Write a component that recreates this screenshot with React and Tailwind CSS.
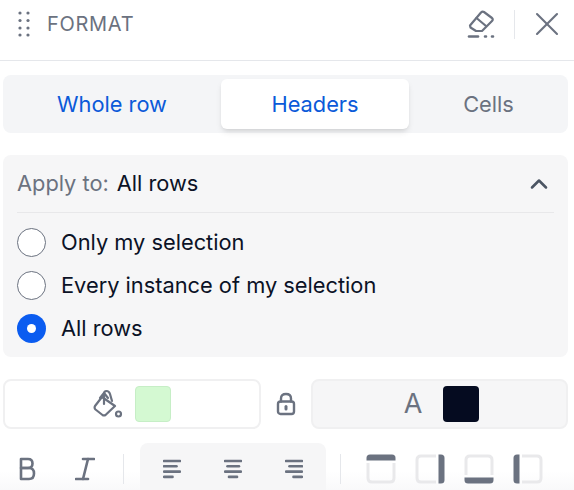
import { X, ChevronUp } from "lucide-react";

function DragDots() {
  return (
    <svg width="14" height="26" viewBox="0 0 14 26" fill="#6b7280">
      {[2, 9.5, 17, 24].map((y) => (
        <g key={y}>
          <circle cx="3" cy={y} r="1.6" />
          <circle cx="11" cy={y} r="1.6" />
        </g>
      ))}
    </svg>
  );
}

function EraserIcon() {
  return (
    <svg width="30" height="30" viewBox="0 0 30 30" fill="none" stroke="#6b7280" strokeWidth="2.2" strokeLinejoin="round" strokeLinecap="round">
      <path d="M3 16.5 L14 3.5 Q15.5 2 17 3 L25 9 Q26.5 10.5 25 12 L15 22 H9 L3.5 18.5 Z" />
      <path d="M9.5 9 L19 17" />
      <path d="M2 27.5 H11" strokeWidth="2.6" />
      <path d="M18 27.5 H19 M25 27.5 H26" strokeWidth="2.6" />
    </svg>
  );
}

function BucketIcon() {
  return (
    <svg width="30" height="30" viewBox="0 0 30 30" fill="none" stroke="#6b7280" strokeWidth="2.2" strokeLinejoin="round" strokeLinecap="round">
      <path d="M9 8 L2 17 Q1 19 2.5 20.5 L9.5 26 Q11 27 12.5 26 L22 17 Z" />
      <path d="M11 15 V5 Q11 2 13.5 2 Q16 2 17 5 L19 12" />
      <path d="M7 9 L11 4 L15 9" />
      <circle cx="25.5" cy="25" r="2.5" />
    </svg>
  );
}

function LockIcon() {
  return (
    <svg width="20" height="24" viewBox="0 0 20 24" fill="none" stroke="#6b7280" strokeWidth="2.4" strokeLinecap="round" strokeLinejoin="round">
      <rect x="2" y="9.5" width="16" height="12.5" rx="2.5" />
      <path d="M5 9.5 V6.5 Q5 2 10 2 Q15 2 15 6.5 V9.5" />
      <path d="M10 14.5 V17" strokeWidth="3" />
    </svg>
  );
}

function BoldIcon() {
  return (
    <svg width="20" height="26" viewBox="0 0 20 26" fill="none" stroke="#6b7280" strokeWidth="2.6" strokeLinecap="round" strokeLinejoin="round">
      <path d="M4 3 H11 Q15.5 3 15.5 7.5 Q15.5 12 11 12 H4 Z" />
      <path d="M4 12 H12 Q17 12 17 17.5 Q17 23 12 23 H4 Z" />
    </svg>
  );
}

function ItalicIcon() {
  return (
    <svg width="20" height="26" viewBox="0 0 20 26" fill="none" stroke="#6b7280" strokeWidth="2.6" strokeLinecap="round">
      <path d="M8 3 H19" />
      <path d="M1 23 H13" />
      <path d="M13 3 L8 23" />
    </svg>
  );
}

function AlignIcon({ lines }) {
  return (
    <svg width="18" height="20" viewBox="0 0 18 20" stroke="#6b7280" strokeWidth="2.6" strokeLinecap="round">
      {lines.map(([a, b], i) => (
        <path key={i} d={`M${a} ${2 + i * 5.3} H${b}`} />
      ))}
    </svg>
  );
}

function BorderIcon({ rotate }) {
  return (
    <svg width="30" height="30" viewBox="0 0 30 30" fill="none">
      <g transform={`rotate(${rotate} 15 15)`}>
        <path d="M2 9 V24 Q2 28 6 28 H24 Q28 28 28 24 V9" stroke="#e9e9eb" strokeWidth="3" />
        <path d="M0.5 4 Q0.5 0.5 4 0.5 H26 Q29.5 0.5 29.5 4 V6.5 H0.5 Z" fill="#6b7280" />
      </g>
    </svg>
  );
}

function Radio({ checked, label }) {
  return (
    <label className="flex items-center gap-[15px] h-[43px]">
      {checked ? (
        <span className="w-[29px] h-[29px] rounded-full bg-[#0b5cf0] flex items-center justify-center">
          <span className="w-[9px] h-[9px] rounded-full bg-white" />
        </span>
      ) : (
        <span className="w-[29px] h-[29px] rounded-full bg-white border border-[#6b7280]" />
      )}
      <span className="text-[21.8px] tracking-[0px] text-[#0b1226]">{label}</span>
    </label>
  );
}

export default function App() {
  return (
    <div className="w-[574px] h-[490px] overflow-hidden bg-white font-['Inter',sans-serif]">
      <div className="h-[61px] border-b border-[#e5e7eb] flex items-center pl-[17px] pr-[7px] pb-[12px]">
        <DragDots />
        <span className="ml-[16px] text-[20px] tracking-[0.7px] text-[#6b7280]">FORMAT</span>
        <div className="ml-auto flex items-center">
          <EraserIcon />
          <div className="w-px h-[29px] bg-[#e5e7eb] ml-[17px] mr-[12px]" />
          <X size={40} strokeWidth={1.25} color="#6b7280" />
        </div>
      </div>

      <div className="mx-[3px] mt-[14px] w-[565px] h-[58px] bg-[#f4f5f7] rounded-lg p-1 grid grid-cols-[214px_188px_1fr] items-center text-center text-[21.8px]">
        <div className="text-[#0b5ad9] pr-1">Whole row</div>
        <div className="h-[50px] bg-white rounded-md shadow-md flex items-center justify-center text-[#0b5ad9]">Headers</div>
        <div className="text-[#6b7280] pl-1">Cells</div>
      </div>

      <div className="mx-[3px] mt-[22px] w-[565px] h-[202px] bg-[#f6f6f7] rounded-lg px-[14px]">
        <div className="h-[58px] border-b border-[#e8e8ea] flex items-center text-[21.8px]">
          <span className="text-[#6b7280]">Apply to:</span>
          <span className="ml-2 text-[#0b1226]">All rows</span>
          <ChevronUp className="ml-auto mr-[1px]" size={28} strokeWidth={2.2} color="#4b5563" />
        </div>
        <div className="pt-2">
          <Radio label="Only my selection" />
          <Radio label="Every instance of my selection" />
          <Radio checked label="All rows" />
        </div>
      </div>

      <div className="mx-[3px] mt-[22px] w-[565px] flex items-center">
        <div className="w-[258px] h-[50px] rounded-lg border-2 border-[#f0f0f1] flex items-center justify-center gap-[12px]">
          <BucketIcon />
          <span className="w-[36px] h-[36px] rounded bg-[#d4f9d2] border border-[#c6eec6]" />
        </div>
        <div className="w-[50px] flex justify-center">
          <LockIcon />
        </div>
        <div className="flex-1 h-[50px] rounded-lg border-2 border-[#f0f0f1] bg-[#f6f6f7] flex items-center justify-center gap-[21px] pl-[4px]">
          <span className="text-[27px] text-[#6b7280]">A</span>
          <span className="w-[36px] h-[36px] rounded bg-[#050b20]" />
        </div>
      </div>

      <div className="mt-[14px] h-[47px] pt-[4px] flex items-center bg-gradient-to-b from-white from-60% to-[#f9f9fa]">
        <div className="w-[123px] flex items-center pl-[17px] gap-[38px]">
          <BoldIcon />
          <ItalicIcon />
        </div>
        <div className="w-px h-[30px] bg-[#e5e7eb]" />
        <div className="ml-[16px] -mt-[4px] w-[186px] h-[47px] bg-[#f6f6f7] rounded-t-lg flex items-center justify-center gap-[43px] pt-[4px]">
          <AlignIcon lines={[[1, 17], [1, 13.5], [1, 17], [1, 9.5]]} />
          <AlignIcon lines={[[1, 17], [3.5, 15], [1, 17], [5, 13]]} />
          <AlignIcon lines={[[1, 17], [4.5, 17], [1, 17], [8.5, 17]]} />
        </div>
        <div className="w-px h-[30px] bg-[#e5e7eb] ml-[14px]" />
        <div className="ml-[25px] flex gap-[19px]">
          <BorderIcon rotate={0} />
          <BorderIcon rotate={90} />
          <BorderIcon rotate={180} />
          <BorderIcon rotate={270} />
        </div>
      </div>
    </div>
  );
}
